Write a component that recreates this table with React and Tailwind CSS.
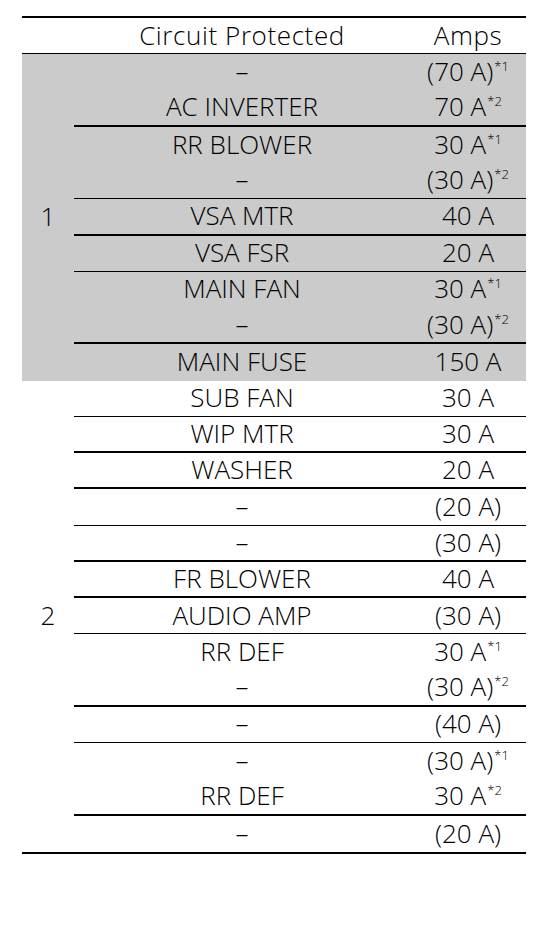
import React from 'react';

const group1 = [
  { rows: [['–', '(70 A)', '*1'], ['AC INVERTER', '70 A', '*2']], line: 'border-b-2' },
  { rows: [['RR BLOWER', '30 A', '*1'], ['–', '(30 A)', '*2']], line: 'border-b' },
  { rows: [['VSA MTR', '40 A']], line: 'border-b-2' },
  { rows: [['VSA FSR', '20 A']], line: 'border-b' },
  { rows: [['MAIN FAN', '30 A', '*1'], ['–', '(30 A)', '*2']], line: 'border-b-2' },
  { rows: [['MAIN FUSE', '150 A']], line: '' },
];

const group2 = [
  { rows: [['SUB FAN', '30 A']], line: 'border-b' },
  { rows: [['WIP MTR', '30 A']], line: 'border-b-2' },
  { rows: [['WASHER', '20 A']], line: 'border-b-2' },
  { rows: [['–', '(20 A)']], line: 'border-b' },
  { rows: [['–', '(30 A)']], line: 'border-b-2' },
  { rows: [['FR BLOWER', '40 A']], line: 'border-b-2' },
  { rows: [['AUDIO AMP', '(30 A)']], line: 'border-b' },
  { rows: [['RR DEF', '30 A', '*1'], ['–', '(30 A)', '*2']], line: 'border-b-2' },
  { rows: [['–', '(40 A)']], line: 'border-b' },
  { rows: [['–', '(30 A)', '*1'], ['RR DEF', '30 A', '*2']], line: 'border-b-2' },
  { rows: [['–', '(20 A)']], line: '' },
];

const Row = ({ circuit, amps, note }) => (
  <div className="flex flex-1 items-center pb-[2px]">
    <div className="w-[336px] text-center">{circuit}</div>
    <div className="flex-1 text-center">
      {amps}
      {note && <sup className="text-[13px] -top-[10px] ml-[1px]">{note}</sup>}
    </div>
  </div>
);

const Group = ({ label, blocks, gray }) => (
  <div className={`flex ${gray ? 'bg-[#cbcbcb]' : ''}`}>
    <div className="w-[52px] flex items-center justify-center pb-[2px]">{label}</div>
    <div className="flex-1 flex flex-col">
      {blocks.map((b, i) => (
        <div
          key={i}
          className={`flex flex-col border-black ${b.line} ${b.rows.length === 2 ? 'h-[72.5px]' : 'h-[36.25px]'}`}
        >
          {b.rows.map((r, j) => (
            <Row key={j} circuit={r[0]} amps={r[1]} note={r[2]} />
          ))}
        </div>
      ))}
    </div>
  </div>
);

export default function App() {
  return (
    <div
      className="w-[541px] h-[943px] bg-white pt-[16px] pl-[22px] text-black text-[26px] font-[350] leading-none"
      style={{ fontFamily: '"Open Sans", "Noto Sans", sans-serif' }}
    >
      <div className="w-[504px] border-t-2 border-b-2 border-black">
        <div className="flex items-center h-[36.25px] border-b border-black pb-[2px]">
          <div className="w-[52px]" />
          <div className="w-[336px] text-center tracking-[0.6px]">Circuit Protected</div>
          <div className="flex-1 text-center tracking-[0.6px]">Amps</div>
        </div>
        <Group label="1" blocks={group1} gray />
        <Group label="2" blocks={group2} />
      </div>
    </div>
  );
}
